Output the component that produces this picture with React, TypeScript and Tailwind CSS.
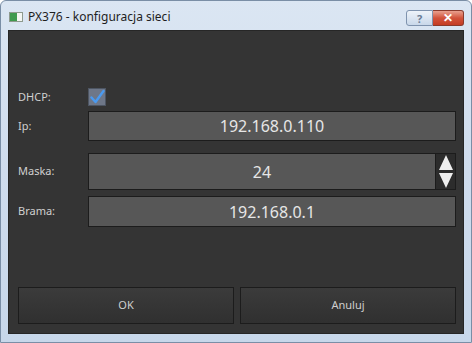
import React from "react";

export default function App() {
  const font = { fontFamily: '"Noto Sans", "Open Sans", sans-serif' } as React.CSSProperties;
  return (
    <div className="w-[472px] h-[343px] bg-white" style={font}>
      <div className="w-[472px] h-[343px] flex flex-col rounded-t-[6px] border border-[#7a8ea6] bg-gradient-to-b from-[#dbe6f3] via-[#cfdced] to-[#c7d7ea]">
        {/* title bar */}
        <div className="h-[29px] flex items-start pt-[8px] pl-[8px] pr-[7px]">
          <div className="w-[14px] h-[10px] mt-[3px] bg-[#f3f6f3] border border-[#8e9a8e] flex">
            <div className="w-[7px] h-full bg-[#3f9a4f]" />
          </div>
          <span className="ml-[5px] text-[12px] leading-[16px] text-[#1e1e1e]">PX376 - konfiguracja sieci</span>
          <div className="flex-1" />
          <div className="flex mt-[1px]">
            <div className="w-[27px] h-[16px] rounded-l-[3px] border border-[#7f93ae] bg-gradient-to-b from-[#eef3f9] to-[#c9d8ea] flex items-center justify-center text-[11px] leading-none font-bold text-[#6a7c94]">?</div>
            <div className="w-[31px] h-[16px] rounded-r-[3px] border border-[#8a3a2c] border-l-0 bg-gradient-to-b from-[#e8a08f] via-[#d2533b] to-[#c43c24] flex items-center justify-center text-[12px] leading-none font-bold text-white">✕</div>
          </div>
        </div>
        {/* body */}
        <div className="flex-1 px-[7px] pb-[8px]">
          <div className="h-full bg-[#343434] border border-[#262626] flex flex-col pl-[9px] pr-[7px]">
            {/* DHCP */}
            <div className="flex items-center mt-[57px] h-[18px]">
              <div className="w-[70px] text-[11px] text-[#d0d0d0]">DHCP:</div>
              <div className="w-[18px] h-[18px] bg-[#6e7788] border border-[#4d5562] flex items-center justify-center">
                <svg width="16" height="16" viewBox="0 0 16 16">
                  <path d="M2.5 8.5 L6.5 13 L14.5 2" stroke="#4a9af0" strokeWidth="2.4" fill="none" strokeLinejoin="round" strokeLinecap="round" />
                </svg>
              </div>
            </div>
            {/* Ip */}
            <div className="flex items-center mt-[5px] h-[30px]">
              <div className="w-[70px] text-[11px] text-[#d0d0d0]">Ip:</div>
              <div className="flex-1 h-full bg-[#575757] border border-[#1c1c1c] flex items-center justify-center text-[16px] text-[#e6e6e6]">192.168.0.110</div>
            </div>
            {/* Maska */}
            <div className="flex items-center mt-[12px] h-[37px]">
              <div className="w-[70px] text-[11px] text-[#d0d0d0]">Maska:</div>
              <div className="flex-1 h-full flex">
                <div className="flex-1 h-full bg-[#575757] border border-[#1c1c1c] flex items-center justify-center text-[16px] text-[#e6e6e6]">24</div>
                <div className="w-[20px] h-full bg-[#2c2c2c] border border-[#1c1c1c] border-l-0 flex flex-col items-center justify-center gap-[3px]">
                  <svg width="14" height="15" viewBox="0 0 14 15"><path d="M7 0 L14 15 L0 15 Z" fill="#eeeeee" /></svg>
                  <svg width="14" height="15" viewBox="0 0 14 15"><path d="M0 0 L14 0 L7 15 Z" fill="#eeeeee" /></svg>
                </div>
              </div>
            </div>
            {/* Brama */}
            <div className="flex items-center mt-[6px] h-[31px]">
              <div className="w-[70px] text-[11px] text-[#d0d0d0]">Brama:</div>
              <div className="flex-1 h-full bg-[#575757] border border-[#1c1c1c] flex items-center justify-center text-[16px] text-[#e6e6e6]">192.168.0.1</div>
            </div>
            <div className="flex-1" />
            {/* buttons */}
            <div className="flex gap-[6px] h-[37px] mb-[9px]">
              <div className="flex-1 bg-gradient-to-b from-[#3b3b3b] to-[#303030] border border-[#1c1c1c] flex items-center justify-center text-[11px] text-[#cfcfcf]">OK</div>
              <div className="flex-1 bg-gradient-to-b from-[#3b3b3b] to-[#303030] border border-[#1c1c1c] flex items-center justify-center text-[11px] text-[#cfcfcf]">Anuluj</div>
            </div>
          </div>
        </div>
      </div>
    </div>
  );
}
